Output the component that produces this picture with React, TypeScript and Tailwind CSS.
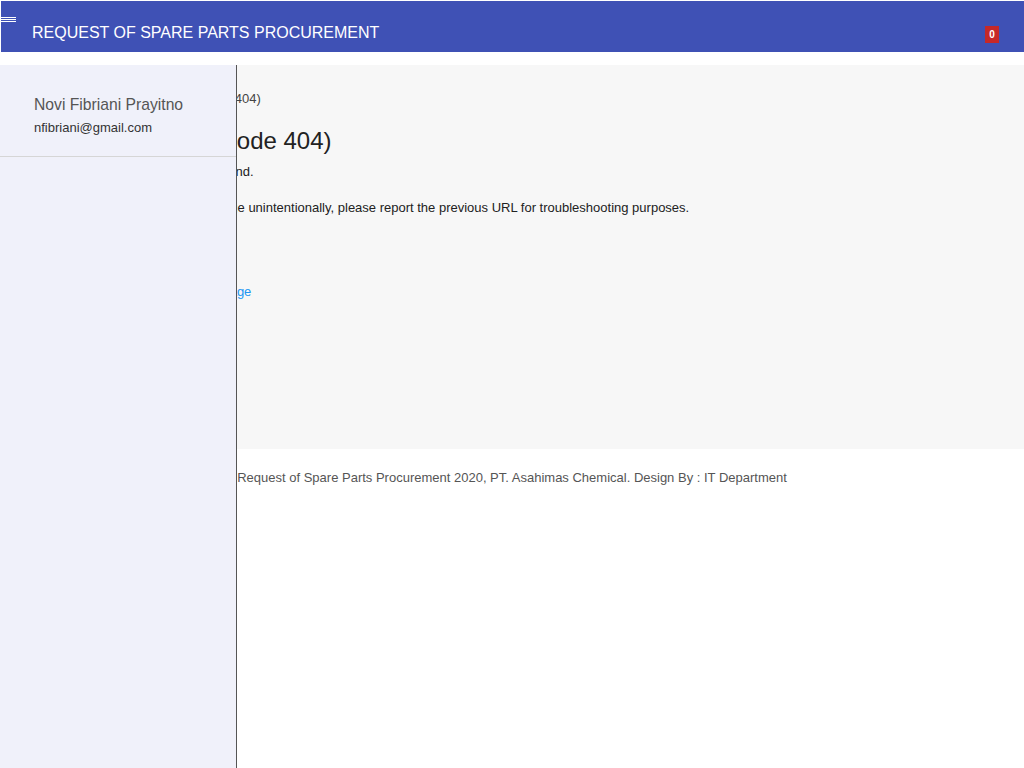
import React from "react";

export default function App() {
  const font = { fontFamily: '"Liberation Sans", Arial, sans-serif' };
  return (
    <div className="relative w-full h-[768px] bg-white overflow-hidden" style={font}>
      {/* Header */}
      <div className="pt-px pl-px">
        <header className="h-[51px] bg-[#3f51b5] flex items-center justify-between pl-[31px] pr-[25px]">
          <h1 className="mt-[12px] text-white text-[16px] leading-none">REQUEST OF SPARE PARTS PROCUREMENT</h1>
          <span className="mt-[16px] w-[14px] h-[17px] bg-[#c62828] text-white text-[10px] font-bold flex items-center justify-center leading-none">0</span>
        </header>
      </div>
      {/* hamburger */}
      <div className="absolute left-0 top-[17px] w-[16px] flex flex-col gap-px">
        <div className="h-px bg-white" />
        <div className="h-px bg-white" />
        <div className="h-px bg-white" />
      </div>

      {/* Main */}
      <main className="mt-[13px] h-[384px] bg-[#f7f7f7] pl-[27px] pt-[26px]">
        <div className="-ml-[4px] text-[13px] leading-[16px] text-[#444]">Dashboard / Page Not Found (Code 404)</div>
        <div className="ml-[3px] mt-[19px] text-[24px] leading-[30px] text-[#222]">Page Not Found (Code 404)</div>
        <div className="-ml-[4px] mt-[8px] text-[13px] leading-[16px] text-[#222]">The requested page could not be found.</div>
        <div className="ml-[40px] mt-[20px] text-[13px] leading-[16px] text-[#222]">
          If you have arrived at this page unintentionally, please report the previous URL for troubleshooting purposes.
        </div>
        <div className="-ml-[4px] mt-[68px] text-[13px] leading-[16px] text-[#2196f3]">Click here to go back to the Home page</div>
      </main>

      {/* Footer */}
      <footer className="pt-[21px] text-center text-[13px] leading-[16px] text-[#555]">
        Request of Spare Parts Procurement 2020, PT. Asahimas Chemical. Design By : IT Department
      </footer>

      {/* Sidebar drawer */}
      <aside className="absolute left-0 top-[65px] bottom-0 w-[237px] bg-[#f0f1fa] border-r border-[#555]">
        <div className="pl-[34px] pt-[30px] pb-[20px] border-b border-[#d6d6d6]">
          <div className="text-[15.7px] leading-[20px] text-[#555]">Novi Fibriani Prayitno</div>
          <div className="mt-[5px] text-[13px] leading-[16px] text-[#333]">nfibriani@gmail.com</div>
        </div>
      </aside>
    </div>
  );
}
